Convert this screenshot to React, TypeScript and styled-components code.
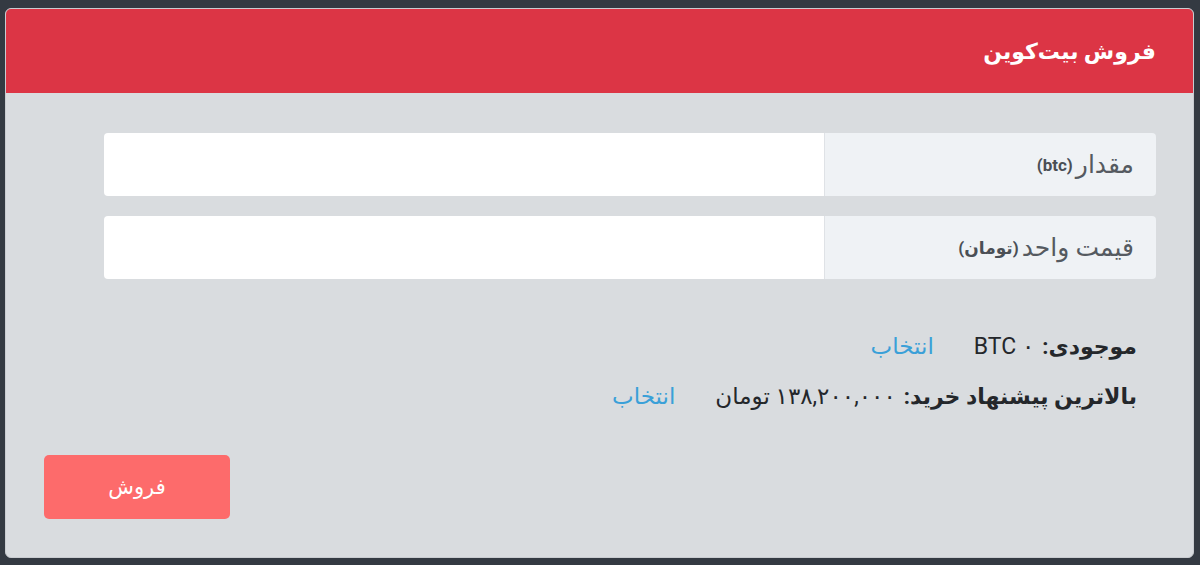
import React from 'react';
import styled, {createGlobalStyle} from 'styled-components';

const GlobalStyle = createGlobalStyle`
  html, body {
    margin: 0;
    padding: 0;
    background: #343a42;
  }
  body {
    font-family: Roboto, "DejaVu Sans", sans-serif;
  }
`;

const Page = styled.div`
  padding: 8px 6px 9px 5px;
  min-height: 565px;
  box-sizing: border-box;
`;

const Card = styled.div`
  direction: rtl;
  border-radius: 6px;
  overflow: hidden;
  background: #d9dcdf;
  border: 1px solid #c9ccd0;
`;

const Header = styled.div`
  background: #dc3545;
  height: 84px;
  display: flex;
  align-items: center;
  padding: 0 37px;
  color: #fff;
  font-size: 22px;
  font-weight: bold;
`;

const Body = styled.div`
  padding: 40px 37px 38px 38px;
  display: flex;
  flex-direction: column;
`;

const Fields = styled.div`
  display: flex;
  flex-direction: column;
  gap: 20px;
  margin-left: 60px;
`;

const InputGroup = styled.div`
  display: flex;
  height: 63px;
  border-radius: 4px;
  overflow: hidden;
`;

const Label = styled.div`
  width: 332px;
  flex-shrink: 0;
  background: #eff2f5;
  border-left: 1px solid #dfe2e6;
  display: flex;
  align-items: center;
  padding-right: 22px;
  box-sizing: border-box;
  color: #555a60;
  font-size: 25px;
`;

const Unit = styled.span`
  font-size: 17px;
  font-weight: bold;
  color: #4a4f55;
  margin-right: 3px;
`;

const Input = styled.input`
  flex: 1;
  border: none;
  outline: none;
  background: #fff;
  font-size: 18px;
  padding: 0 16px;
`;

const Info = styled.div`
  margin-top: 42px;
  padding-right: 19px;
  display: flex;
  flex-direction: column;
`;

const InfoRow = styled.div`
  display: flex;
  align-items: center;
  height: 50px;
  font-size: 22px;
  color: #24272b;
`;

const Key = styled.span`
  font-weight: bold;
  margin-left: 8px;
`;

const Value = styled.span`
  font-size: 23px;
`;

const Pick = styled.a`
  color: #3aa0d8;
  font-size: 23px;
  margin-right: 40px;
  cursor: pointer;
`;

const Actions = styled.div`
  display: flex;
  justify-content: flex-end;
  margin-top: 34px;
`;

const SellButton = styled.button`
  width: 186px;
  height: 64px;
  border: none;
  border-radius: 5px;
  background: #fd6b6b;
  color: #fff;
  font-family: inherit;
  font-size: 21px;
  cursor: pointer;
`;

export default function App(): JSX.Element {
  return (
    <>
      <GlobalStyle />
      <Page>
        <Card>
          <Header>فروش بیت‌کوین</Header>
          <Body>
            <Fields>
              <InputGroup>
                <Label>
                  مقدار<Unit>(btc)</Unit>
                </Label>
                <Input type="text" />
              </InputGroup>
              <InputGroup>
                <Label>
                  قیمت واحد<Unit>(تومان)</Unit>
                </Label>
                <Input type="text" />
              </InputGroup>
            </Fields>
            <Info>
              <InfoRow>
                <Key>موجودی:</Key>
                <Value>۰ BTC</Value>
                <Pick>انتخاب</Pick>
              </InfoRow>
              <InfoRow>
                <Key>بالاترین پیشنهاد خرید:</Key>
                <Value>۱۳۸,۲۰۰,۰۰۰ تومان</Value>
                <Pick>انتخاب</Pick>
              </InfoRow>
            </Info>
            <Actions>
              <SellButton>فروش</SellButton>
            </Actions>
          </Body>
        </Card>
      </Page>
    </>
  );
}
